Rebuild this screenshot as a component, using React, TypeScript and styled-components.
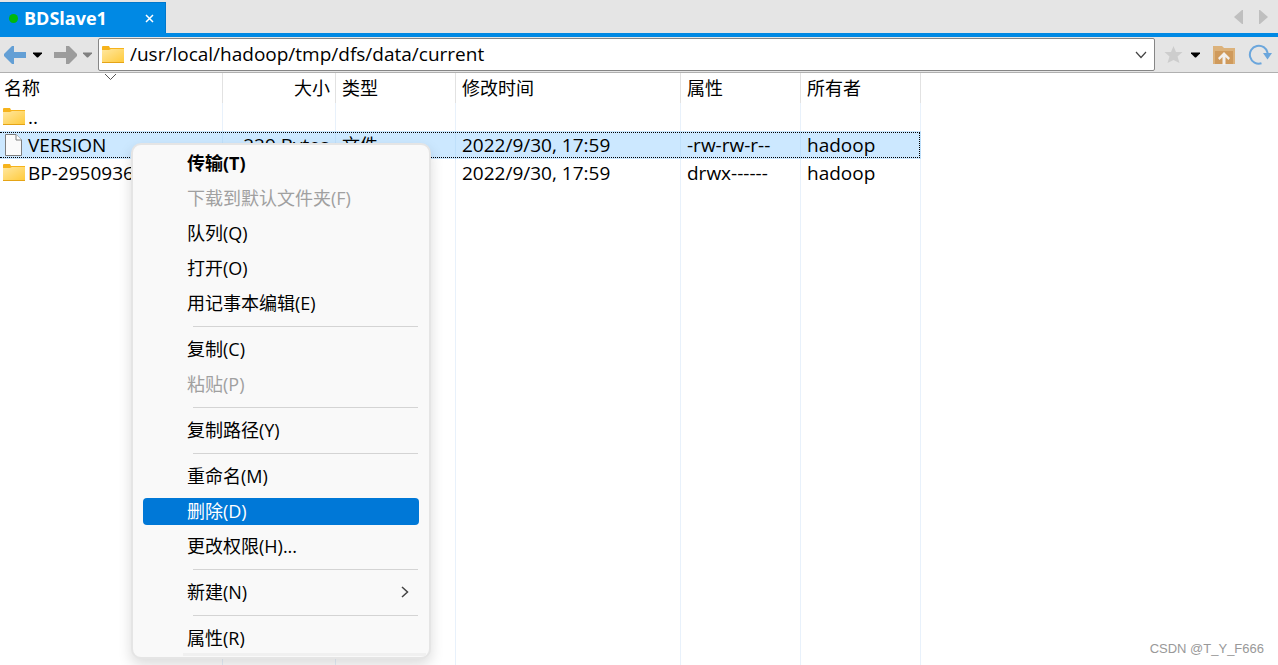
import React from "react";
import styled, { createGlobalStyle, css } from "styled-components";

const Global = createGlobalStyle`
  * { box-sizing: border-box; }
  body {
    margin: 0;
    background: #fff;
    color: #000;
    font: 18px/26px "Open Sans", "Noto Sans CJK SC", sans-serif;
  }
  button, input { font: inherit; color: inherit; }
`;

const Page = styled.div`
  display: flex;
  flex-direction: column;
  min-height: 100vh;
  position: relative;
`;

const TabBar = styled.header`
  display: flex;
  justify-content: space-between;
  align-items: flex-end;
  height: 37px;
  background: #e5e5e5;
  border-bottom: 4px solid #0089e4;
`;

const Tab = styled.div`
  display: flex;
  align-items: center;
  width: 166px;
  height: 31px;
  padding: 0 10px 0 9px;
  background: #0089e4;
  border: solid #0078cc;
  border-width: 1px 1px 0 0;
  color: #fff;
`;

const StatusDot = styled.span`
  width: 9px;
  height: 9px;
  border-radius: 50%;
  background: #00b80c;
`;

const TabTitle = styled.span`
  flex: 1;
  padding-left: 6px;
  font-weight: 700;
`;

const IconButton = styled.button`
  display: flex;
  align-items: center;
  justify-content: center;
  padding: 0;
  border: 0;
  background: none;
`;

const TabArrows = styled.div`
  display: flex;
  align-self: center;
  gap: 16px;
  padding-right: 10px;
`;

const Toolbar = styled.div`
  display: flex;
  align-items: center;
  height: 36px;
  padding: 0 6px 0 4px;
  background: #e5e5e5;
  border-bottom: 1px solid #b0b0b0;
`;

const ToolGroup = styled.div<{ $gap: number }>`
  display: flex;
  align-items: center;
  gap: ${(p) => p.$gap}px;
`;

const AddressBar = styled.label`
  display: flex;
  flex: 1;
  align-items: center;
  height: 33px;
  margin: 0 9px 0 6px;
  padding: 0 7px 0 3px;
  background: #fff;
  border: 1px solid #868686;
  border-radius: 2px;
`;

const AddressInput = styled.input`
  flex: 1;
  min-width: 0;
  height: 28px;
  padding: 0 0 2px 6px;
  border: 0;
  outline: 0;
  background: transparent;
  font-size: 19px;
`;

const Listing = styled.main`
  display: flex;
  flex: 1;
  flex-direction: column;
  align-items: flex-start;
  position: relative;
`;

const FileTable = styled.table`
  flex: 1;
  width: 921px;
  table-layout: fixed;
  border-collapse: separate;
  border-spacing: 0;
`;

const HeadCell = styled.th<{ $right?: boolean }>`
  position: relative;
  height: 30px;
  padding: 2px 5px 2px 4px;
  border-right: 1px solid #e2e2e2;
  font-weight: 400;
  line-height: 26px;
  text-align: ${(p) => (p.$right ? "right" : "left")};
  & + & { padding-left: 6px; }
`;

const SortMark = styled.svg`
  position: absolute;
  top: 0;
  left: 104px;
`;

const Cell = styled.td<{ $right?: boolean; $label?: boolean }>`
  height: 28px;
  padding: 0 6px;
  border-right: 1px solid #e8f1fb;
  font-size: ${(p) => (p.$label ? 18 : 19)}px;
  line-height: 26px;
  white-space: nowrap;
  text-align: ${(p) => (p.$right ? "right" : "left")};
  &:first-child { padding: 0 0 0 3px; }
`;

const Row = styled.tr<{ $selected?: boolean }>`
  ${(p) =>
    p.$selected &&
    css`
      position: relative;
      background: #cce8ff;
      &::after {
        content: "";
        position: absolute;
        inset: 1px 1px 1px 0;
        border: 1px dotted #000;
        border-left: 0;
      }
      ${Cell} { border-color: #bfe0fb; }
    `}
`;

const FillerCell = styled.td`
  border-right: 1px solid #e8f1fb;
`;

const FileName = styled.span`
  display: flex;
  align-items: center;
  gap: 3px;
  overflow: hidden;
`;

const Menu = styled.ul`
  position: absolute;
  top: 70px;
  left: 131px;
  width: 300px;
  margin: 0;
  padding: 1px 0;
  list-style: none;
  background: #f9f9f9;
  border: 2px solid #e5e5e5;
  border-radius: 10px;
  box-shadow: 0 6px 14px rgba(0, 0, 0, 0.14);
  &::after {
    content: "";
    position: absolute;
    right: 3px;
    bottom: 1px;
    left: 50px;
    height: 3px;
    background: #f0f0f0;
  }
`;

const MenuItem = styled.li`
  padding: 4px 10px;
`;

const MenuButton = styled.button<{ $bold?: boolean; $active?: boolean }>`
  display: flex;
  align-items: center;
  justify-content: space-between;
  width: 100%;
  height: 27px;
  padding: 0 10px 1px 44px;
  border: 0;
  border-radius: 4px;
  background: ${(p) => (p.$active ? "#0078d7" : "transparent")};
  color: ${(p) => (p.$active ? "#fff" : "#000")};
  font-weight: ${(p) => (p.$bold ? 700 : 400)};
  line-height: 26px;
  &:disabled { color: #a0a0a0; }
`;

const Separator = styled.li`
  height: 11px;
  padding: 5px 11px 5px 60px;
  &::after {
    content: "";
    display: block;
    height: 1px;
    background: #d4d4d4;
  }
`;

const Watermark = styled.footer`
  position: absolute;
  right: 14px;
  bottom: 6px;
  color: #999;
  font: 13px/20px "Liberation Sans", sans-serif;
`;

const FolderIcon = () => (
  <svg width="22" height="20" viewBox="0 0 22 20" aria-hidden="true">
    <defs>
      <linearGradient id="folder" x1="0" y1="0" x2="1" y2="1">
        <stop offset="0" stopColor="#ffe7a0" />
        <stop offset="1" stopColor="#ffcb3d" />
      </linearGradient>
    </defs>
    <path d="M0 2Q0 1 1 1H7L8 3H22V17H0Z" fill="#f6b31c" />
    <path d="M0 5H7L9 4H22V17H0Z" fill="url(#folder)" />
    <path d="M0 17.500H22" stroke="#e5a416" />
  </svg>
);

const FileIcon = () => (
  <svg width="22" height="22" viewBox="0 0 22 22" aria-hidden="true">
    <path d="M2.500.5H13L18.500 6V21.500H2.500Z" fill="#fafafa" stroke="#7f7f7f" />
    <path d="M13 .5V6H18.500" fill="#fff" stroke="#7f7f7f" />
  </svg>
);

const Caret = ({ color }: { color: string }) => (
  <svg width="9" height="6" viewBox="0 0 9 6" aria-hidden="true">
    <path d="M0 .5H9V1.500L5 5.500H4L0 1.500Z" fill={color} />
  </svg>
);

const Arrow = ({ color, flip }: { color: string; flip?: boolean }) => (
  <svg width="23" height="20" viewBox="0 0 23 20" aria-hidden="true">
    <path
      d={flip ? "M0 7H12V1H15L23 9V11L15 19H12V13H0Z" : "M0 9L8 1H10V7H22V13H10V19H8L0 11Z"}
      fill={color}
    />
  </svg>
);

const columns = [
  { label: "名称", width: 223 },
  { label: "大小", width: 113, right: true },
  { label: "类型", width: 120 },
  { label: "修改时间", width: 225 },
  { label: "属性", width: 120 },
  { label: "所有者", width: 120 },
];

const files = [
  { name: "..", folder: true, cells: ["", "", "", "", ""] },
  {
    name: "VERSION",
    selected: true,
    cells: ["229 Bytes", "文件", "2022/9/30, 17:59", "-rw-rw-r--", "hadoop"],
  },
  {
    name: "BP-2950936",
    folder: true,
    cells: ["", "", "2022/9/30, 17:59", "drwx------", "hadoop"],
  },
];

type Entry = { label: string; bold?: boolean; disabled?: boolean; active?: boolean; submenu?: boolean };

const menu: (Entry | null)[] = [
  { label: "传输(T)", bold: true },
  { label: "下载到默认文件夹(F)", disabled: true },
  { label: "队列(Q)" },
  { label: "打开(O)" },
  { label: "用记事本编辑(E)" },
  null,
  { label: "复制(C)" },
  { label: "粘贴(P)", disabled: true },
  null,
  { label: "复制路径(Y)" },
  null,
  { label: "重命名(M)" },
  { label: "删除(D)", active: true },
  { label: "更改权限(H)..." },
  null,
  { label: "新建(N)", submenu: true },
  null,
  { label: "属性(R)" },
];

export default function App() {
  return (
    <Page>
      <Global />
      <TabBar>
        <Tab>
          <StatusDot />
          <TabTitle>BDSlave1</TabTitle>
          <IconButton aria-label="Close tab">
            <svg width="11" height="9" viewBox="0 0 11 9" aria-hidden="true">
              <path d="M2 1L9 8M9 1L2 8" stroke="#fff" strokeWidth="1.500" />
            </svg>
          </IconButton>
        </Tab>
        <TabArrows>
          <IconButton aria-label="Previous tab">
            <svg width="9" height="14" viewBox="0 0 9 14"><path d="M0 7L8 0H9V14H8Z" fill="#bfbfbf" /></svg>
          </IconButton>
          <IconButton aria-label="Next tab">
            <svg width="9" height="14" viewBox="0 0 9 14"><path d="M9 7L1 0H0V14H1Z" fill="#bfbfbf" /></svg>
          </IconButton>
        </TabArrows>
      </TabBar>

      <Toolbar>
        <ToolGroup $gap={12}>
          <ToolGroup $gap={6}>
            <IconButton aria-label="Back"><Arrow color="#639fd5" /></IconButton>
            <IconButton aria-label="Back history"><Caret color="#000" /></IconButton>
          </ToolGroup>
          <ToolGroup $gap={6}>
            <IconButton aria-label="Forward"><Arrow color="#9c9c9c" flip /></IconButton>
            <IconButton aria-label="Forward history"><Caret color="#808080" /></IconButton>
          </ToolGroup>
        </ToolGroup>
        <AddressBar>
          <FolderIcon />
          <AddressInput aria-label="Path" defaultValue="/usr/local/hadoop/tmp/dfs/data/current" />
          <IconButton aria-label="Show paths">
            <svg width="12" height="8" viewBox="0 0 12 8"><path d="M1 1L6 6.500L11 1" fill="none" stroke="#444" strokeWidth="1.200" /></svg>
          </IconButton>
        </AddressBar>
        <ToolGroup $gap={13}>
          <ToolGroup $gap={8}>
            <IconButton aria-label="Bookmark">
              <svg width="19" height="20" viewBox="0 0 19 20"><path d="M9.500 1L12 7H18.500L13.500 11.500L15.500 18L9.500 15L3.500 18L5.500 11.500L.5 7H7Z" fill="#cdcdcd" /></svg>
            </IconButton>
            <IconButton aria-label="Bookmark list"><Caret color="#000" /></IconButton>
          </ToolGroup>
          <IconButton aria-label="Parent folder">
            <svg width="22" height="20" viewBox="0 0 22 20">
              <path d="M0 1H9L11 3H22V19H0Z" fill="#dcb27b" />
              <path d="M2 6H20V19H2Z" fill="#cf9a5c" />
              <path d="M11 7L17 13L15.500 15L12.500 12V20H9.500V12L6.500 15L5 13Z" fill="#f2f0ee" />
            </svg>
          </IconButton>
          <IconButton aria-label="Refresh">
            <svg width="24" height="22" viewBox="0 0 24 22">
              <path d="M13.500 19.300A9 9 0 1 1 19.700 9" fill="none" stroke="#6ba6dc" strokeWidth="2" />
              <path d="M15 9H24L19.500 15.500Z" fill="#6ba6dc" />
            </svg>
          </IconButton>
        </ToolGroup>
      </Toolbar>

      <Listing>
        <FileTable>
          <colgroup>
            {columns.map((c) => <col key={c.label} width={c.width} />)}
          </colgroup>
          <thead>
            <tr>
              {columns.map((c, i) => (
                <HeadCell key={c.label} $right={c.right} scope="col">
                  {c.label}
                  {i === 0 && (
                    <SortMark width="13" height="8" viewBox="0 0 13 8" aria-hidden="true">
                      <path d="M1 1L6.500 6.500L12 1" fill="none" stroke="#555" />
                    </SortMark>
                  )}
                </HeadCell>
              ))}
            </tr>
          </thead>
          <tbody>
            {files.map((f) => (
              <Row key={f.name} $selected={f.selected}>
                <Cell>
                  <FileName>
                    {f.folder ? <FolderIcon /> : <FileIcon />}
                    {f.name}
                  </FileName>
                </Cell>
                {f.cells.map((text, i) => (
                  <Cell key={i} $right={i === 0} $label={i === 1}>{text}</Cell>
                ))}
              </Row>
            ))}
            <tr>
              {columns.map((c) => <FillerCell key={c.label} />)}
            </tr>
          </tbody>
        </FileTable>

        <Menu role="menu">
          {menu.map((m, i) =>
            m ? (
              <MenuItem key={i} role="none">
                <MenuButton role="menuitem" $bold={m.bold} $active={m.active} disabled={m.disabled}>
                  {m.label}
                  {m.submenu && (
                    <svg width="8" height="12" viewBox="0 0 8 12" aria-hidden="true">
                      <path d="M1 1L6.500 6L1 11" fill="none" stroke="#444" strokeWidth="1.500" />
                    </svg>
                  )}
                </MenuButton>
              </MenuItem>
            ) : (
              <Separator key={i} role="separator" />
            )
          )}
        </Menu>
      </Listing>
      <Watermark>CSDN @T_Y_F666</Watermark>
    </Page>
  );
}
